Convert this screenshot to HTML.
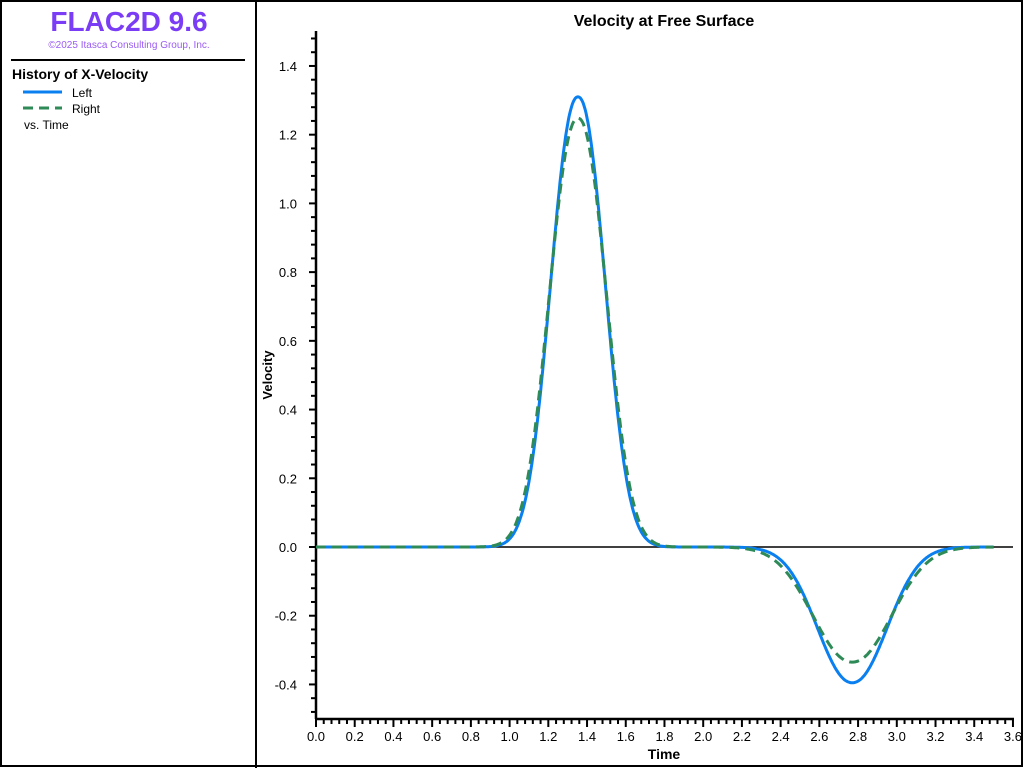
<!DOCTYPE html>
<html><head><meta charset="utf-8"><style>
html,body{margin:0;padding:0;background:#fff;}
body{width:1024px;height:768px;overflow:hidden;position:relative;font-family:"Liberation Sans",sans-serif;}
svg{position:absolute;left:0;top:0;}
</style></head><body>
<svg id="s" width="1024" height="768" xmlns="http://www.w3.org/2000/svg" font-family="Liberation Sans, sans-serif">
<rect x="1" y="1" width="1021" height="765" fill="none" stroke="#000" stroke-width="2"/>
<line x1="256" y1="0" x2="256" y2="768" stroke="#000" stroke-width="2"/>
<text x="129" y="31" text-anchor="middle" font-size="28" font-weight="bold" fill="#7a3cf5">FLAC2D 9.6</text>
<text x="129" y="48" text-anchor="middle" font-size="10" fill="#9a5cf5">©2025 Itasca Consulting Group, Inc.</text>
<line x1="11" y1="60" x2="245" y2="60" stroke="#000" stroke-width="2"/>
<text x="12" y="79" font-size="14" font-weight="bold">History of X-Velocity</text>
<line x1="23" y1="92" x2="62" y2="92" stroke="#0a7ff0" stroke-width="3"/>
<text x="72" y="97" font-size="12">Left</text>
<line x1="23" y1="108" x2="62" y2="108" stroke="#2e8b57" stroke-width="3" stroke-dasharray="10,6"/>
<text x="72" y="113" font-size="12">Right</text>
<text x="24" y="129" font-size="12">vs. Time</text>
<text x="664" y="26" text-anchor="middle" font-size="16" font-weight="bold">Velocity at Free Surface</text>
<text x="664" y="759" text-anchor="middle" font-size="14" font-weight="bold">Time</text>
<text transform="translate(272,375) rotate(-90)" text-anchor="middle" font-size="13" font-weight="bold">Velocity</text>
<g id="ax"></g>
</svg>
<script>
var s=document.getElementById('ax'),h='';
function X(t){return 316+t*193.6;}function Y(v){return 547-v*343.6;}
h+='<line x1="316" y1="31" x2="316" y2="719" stroke="#000" stroke-width="2.5"/>';
h+='<line x1="315" y1="719" x2="1014" y2="719" stroke="#000" stroke-width="2.5"/>';
h+='<line x1="316" y1="547" x2="1013" y2="547" stroke="#000" stroke-width="1.5"/>';
for(var i=-12;i<=37;i++){var v=i*0.04,y=Y(v);if(y<32||y>718)continue;var maj=(i%5==0);
h+='<line x1="'+(maj?309:311)+'" y1="'+y+'" x2="316" y2="'+y+'" stroke="#000" stroke-width="2"/>';
if(maj)h+='<text x="297" y="'+(y+5)+'" text-anchor="end" font-size="13">'+(v).toFixed(1).replace('-0.0','0.0')+'</text>';}
for(var i=0;i<=90;i++){var t=i*0.04,x=X(t);var maj=(i%5==0);
h+='<line x1="'+x+'" y1="719" x2="'+x+'" y2="'+(maj?727:724)+'" stroke="#000" stroke-width="2"/>';
if(maj)h+='<text x="'+x+'" y="741" text-anchor="middle" font-size="13">'+t.toFixed(1)+'</text>';}
function g(t,c,a,s,p){return a*Math.exp(-Math.pow(Math.abs((t-c)/s),p)/2);}
function path(q){var d='';for(var t=0;t<=3.5001;t+=0.005){var v=g(t,q[0],q[1],q[2],2.2)+g(t,q[3],q[4],q[5],2.1);d+=(d?'L':'M')+X(t).toFixed(1)+' '+Y(v).toFixed(1);}return d;}
h+='<path d="'+path([1.353,1.31,0.137,2.77,-0.395,0.177])+'" fill="none" stroke="#0a7ff0" stroke-width="3"/>';
h+='<path d="'+path([1.353,1.248,0.144,2.77,-0.335,0.2])+'" fill="none" stroke="#2e8b57" stroke-width="3" stroke-dasharray="10,6"/>';
s.innerHTML=h;
</script>
</body></html>
